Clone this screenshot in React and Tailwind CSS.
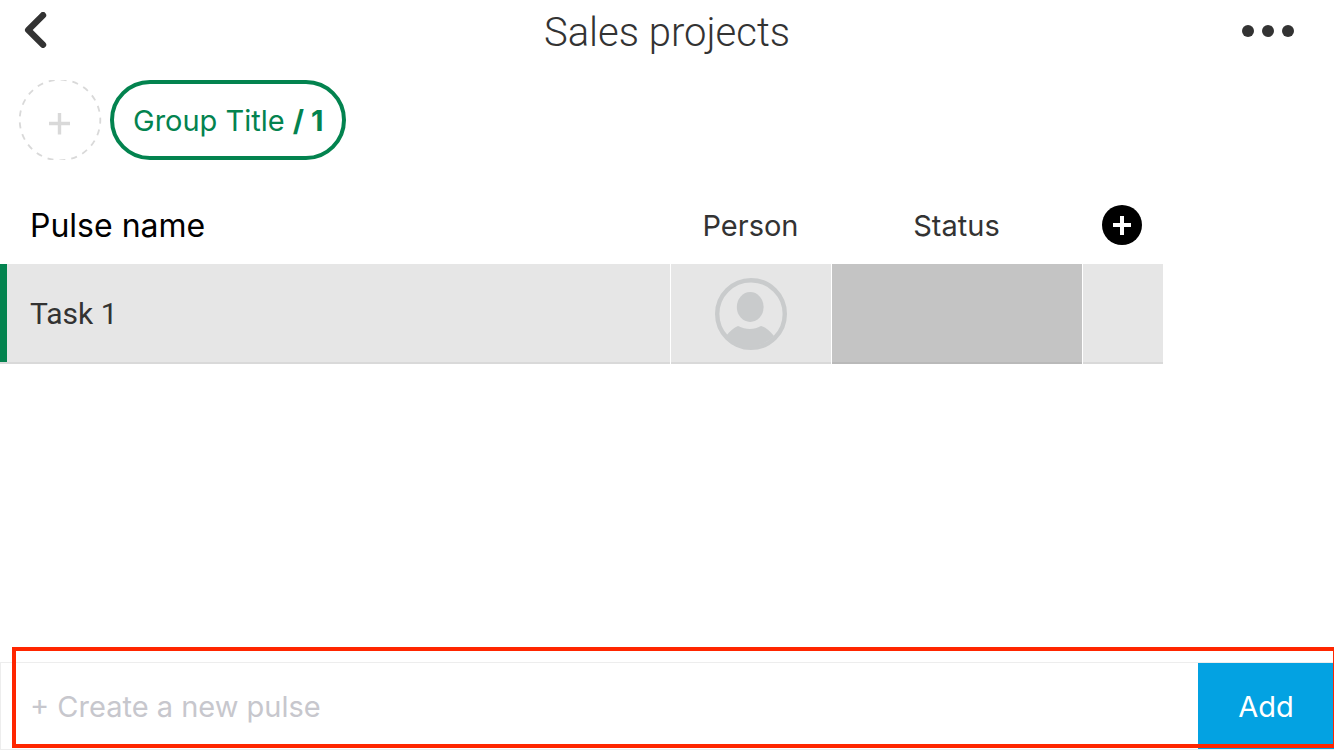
import React, { useState } from 'react';

const ChevronIcon = () => (
  <svg className="h-9 w-6" viewBox="0 0 24 36" fill="none" stroke="currentColor" strokeWidth="6.400" strokeLinecap="round" strokeLinejoin="round" aria-hidden="true">
    <path d="M19 3.200 4.200 18 19 32.800" />
  </svg>
);

const DotsIcon = () => (
  <svg className="h-3 w-13" viewBox="0 0 52 12" fill="currentColor" aria-hidden="true">
    <circle cx="6" cy="6" r="6" />
    <circle cx="26" cy="6" r="6" />
    <circle cx="46" cy="6" r="6" />
  </svg>
);

const AddGroupIcon = () => (
  <svg className="h-20 w-21" viewBox="0 0 84 80" fill="none" stroke="#d9d9d9" aria-hidden="true">
    <circle cx="42" cy="40" r="40.300" strokeWidth="1.800" pathLength="252" strokeDasharray="6 6" strokeDashoffset="2.400" />
    <path d="M41.500 33v21.500M31 43.500h21" strokeWidth="3.400" />
  </svg>
);

const PersonIcon = () => (
  <svg className="h-18 w-18" viewBox="0 0 72 72" fill="#c9cbcc" role="img" aria-label="Unassigned">
    <circle cx="36" cy="36" r="33.800" fill="none" stroke="#c9cbcc" strokeWidth="4.400" />
    <ellipse cx="35.200" cy="29" rx="13.400" ry="15" />
    <path d="M11 58C15 53 19 49.500 23 48C31 52 39 52 46 48C51 49.500 55 53 59 58A33 33 0 0 1 11 58Z" />
  </svg>
);

const AddColumnIcon = () => (
  <svg className="h-10 w-10" viewBox="0 0 40 40" aria-hidden="true">
    <circle cx="20" cy="20" r="20" fill="#000" />
    <path d="M20 11v19M11 20h18" stroke="#fff" strokeWidth="4" />
  </svg>
);

/** Top bar with the back button, board name and menu. */
const Header = () => (
  <header className="grid h-16 grid-cols-[1fr_auto_1fr] items-center px-6 pb-1">
    <button type="button" aria-label="Back" className="cursor-pointer justify-self-start">
      <ChevronIcon />
    </button>
    <h1 className="pt-1.5 font-['Roboto',sans-serif] text-[40px] leading-[48px] font-light">Sales projects</h1>
    <button type="button" aria-label="Board menu" className="mr-4 cursor-pointer justify-self-end pt-0.5">
      <DotsIcon />
    </button>
  </header>
);

const Groups = ({ count }) => (
  <nav className="flex items-center gap-2 px-[18px] pt-4">
    <button type="button" aria-label="Add group" className="cursor-pointer">
      <AddGroupIcon />
    </button>
    <button type="button" className="h-20 cursor-pointer rounded-full border-4 border-[#03834f] px-[19px] pt-0.5 text-[29px] leading-9 text-[#03834f]">
      Group Title <strong className="font-bold">/ {count}</strong>
    </button>
  </nav>
);

const cell = 'flex h-[100px] items-center justify-center border-b-2 pt-0.5';

const PulseTable = ({ pulses }) => (
  <div className="pt-[26px] pr-[171px]">
    <table className="w-full table-fixed border-separate border-spacing-0 text-[29px] leading-9">
      <colgroup>
        <col />
        <col className="w-[161px]" />
        <col className="w-[251px]" />
        <col className="w-20" />
      </colgroup>
      <thead>
        <tr className="h-[78px]">
          <th scope="col" className="pt-0.5 pl-[30px] text-left text-[32px] font-normal text-black">Pulse name</th>
          <th scope="col" className="pt-0.5 pr-0.5 font-normal">Person</th>
          <th scope="col" className="pt-0.5 pr-0.5 font-normal">Status</th>
          <th scope="col" className="pr-0.5">
            <button type="button" aria-label="Add column" className="mx-auto block cursor-pointer">
              <AddColumnIcon />
            </button>
          </th>
        </tr>
      </thead>
      <tbody>
        {pulses.map((name, i) => (
          <tr key={i}>
            <td className="pr-px">
              <div className="flex h-[100px] border-b-2 border-[#d9d9d9] bg-[#e6e6e6]">
                <span className="w-[7px] bg-[#03834f]" />
                <span className="self-center pt-0.5 pl-[23px] font-['Roboto',sans-serif] text-[30px]">{name}</span>
              </div>
            </td>
            <td className="pr-px">
              <div className={`${cell} border-[#d9d9d9] bg-[#e6e6e6]`}>
                <PersonIcon />
              </div>
            </td>
            <td className="pr-px">
              <div className={`${cell} border-[#b9b9b9] bg-[#c4c4c4]`} />
            </td>
            <td>
              <div className={`${cell} border-[#d9d9d9] bg-[#e6e6e6]`} />
            </td>
          </tr>
        ))}
      </tbody>
    </table>
  </div>
);

/** Bottom bar for a new pulse, with the red highlight frame over it. */
const CreateBar = ({ onAdd }) => {
  const [name, setName] = useState('');

  const submit = (e) => {
    e.preventDefault();
    if (!name.trim()) return;
    onAdd(name.trim());
    setName('');
  };

  return (
    <form onSubmit={submit} className="relative mt-auto flex h-[88px] border border-r-0 border-[#ededed] text-[29px] leading-9">
      <input
        type="text"
        aria-label="Create a new pulse"
        placeholder="+ Create a new pulse"
        value={name}
        onChange={(e) => setName(e.target.value)}
        className="min-w-0 flex-1 pt-0.5 pl-[29px] outline-none placeholder:text-[#c7c7cd]"
      />
      <button type="submit" className="w-[136px] cursor-pointer bg-[#03a2e2] pt-0.5 text-white">
        Add
      </button>
      <div className="pointer-events-none absolute -top-4 right-0 bottom-px left-[11px] border-4 border-r border-[#ff2600]" />
    </form>
  );
};

export default function App() {
  const [pulses, setPulses] = useState(['Task 1']);

  return (
    <div className="flex min-h-screen flex-col bg-white font-['Inter',sans-serif] text-[#333333]">
      <Header />
      <main>
        <Groups count={pulses.length} />
        <PulseTable pulses={pulses} />
      </main>
      <CreateBar onAdd={(name) => setPulses([...pulses, name])} />
    </div>
  );
}
